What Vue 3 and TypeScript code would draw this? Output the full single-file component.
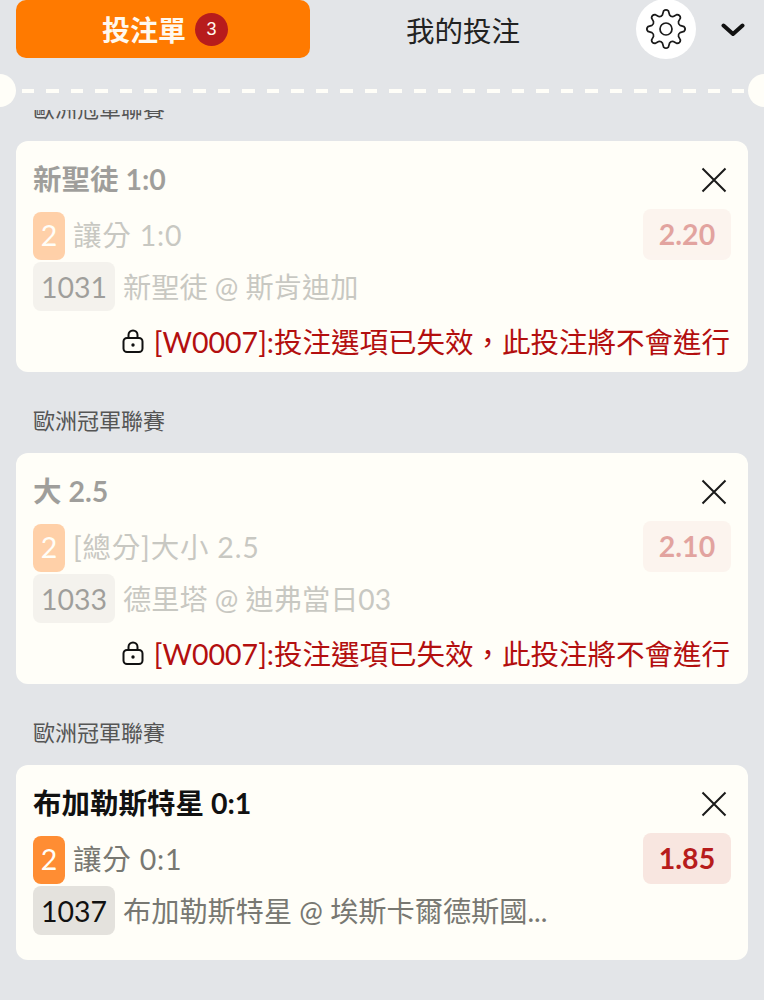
<script setup lang="ts">
type Bet = {
    league: string
    title: string
    market: string
    code: string
    teams: string
    odds: string
    locked: boolean
}

const bets: Bet[] = [
    { league: '歐洲冠軍聯賽', title: '新聖徒 1:0', market: '讓分 1:0', code: '1031', teams: '新聖徒 @ 斯肯迪加', odds: '2.20', locked: true },
    { league: '歐洲冠軍聯賽', title: '大 2.5', market: '[總分]大小 2.5', code: '1033', teams: '德里塔 @ 迪弗當日03', odds: '2.10', locked: true },
    { league: '歐洲冠軍聯賽', title: '布加勒斯特星 0:1', market: '讓分 0:1', code: '1037', teams: '布加勒斯特星 @ 埃斯卡爾德斯國...', odds: '1.85', locked: false }
]

// 8 tooth cog, drawn around the middle of a 44 box
const gearPath = (() => {
    const teeth = 8
    const outer = 19.7
    const inner = 14.5
    const step = (Math.PI * 2) / teeth
    const pt = (r: number, t: number) =>
        `${(22 + r * Math.cos(t)).toFixed(2)} ${(22 + r * Math.sin(t)).toFixed(2)}`
    let d = ''
    for (let i = 0; i < teeth; i++) {
        const a = i * step - Math.PI / 2
        d += i === 0 ? `M${pt(inner, a - step * 0.32)} ` : `Q${pt(inner - 1.5, a - step * 0.5)} ${pt(inner, a - step * 0.32)} `
        d += `L${pt(outer - 1.5, a - step * 0.17)} `
        d += `Q${pt(outer + 0.6, a)} ${pt(outer - 1.5, a + step * 0.17)} `
        d += `L${pt(inner, a + step * 0.32)} `
    }
    const first = -Math.PI / 2
    return `${d}Q${pt(inner - 1.5, first - step * 0.5)} ${pt(inner, first - step * 0.32)} Z`
})()
</script>

<template>
    <div class="page">
        <header class="tabs">
            <div class="tab-active">
                <span>投注單</span>
                <span class="count">3</span>
            </div>
            <div class="tab">我的投注</div>
            <div class="gear">
                <svg width="44" height="44" viewBox="0 0 44 44" fill="none" stroke="#1a1a1a" stroke-width="1.7" stroke-linejoin="round">
                    <path :d="gearPath" />
                    <circle cx="22" cy="22" r="6" />
                </svg>
            </div>
            <svg class="chevron" width="24" height="16" viewBox="0 0 24 16" fill="none" stroke="#111" stroke-width="4" stroke-linecap="round" stroke-linejoin="round">
                <path d="M2.5 3.5 12 12 21.5 3.5" />
            </svg>
        </header>

        <div class="ticket-edge">
            <span class="notch notch-left"></span>
            <span class="dashes"></span>
            <span class="notch notch-right"></span>
        </div>

        <main class="scroller">
            <section v-for="bet in bets" :key="bet.code" class="group">
                <div class="league">{{ bet.league }}</div>
                <article class="card" :class="{ locked: bet.locked }">
                    <div class="title-row">
                        <div class="title">{{ bet.title }}</div>
                        <svg class="close" width="26" height="26" viewBox="0 0 26 26" fill="none" stroke="#1a1a1a" stroke-width="2">
                            <path d="M1.5 1.5 24.5 24.5M24.5 1.5 1.5 24.5" />
                        </svg>
                    </div>
                    <div class="market-row">
                        <span class="num">2</span>
                        <span class="market">{{ bet.market }}</span>
                        <span class="odds">{{ bet.odds }}</span>
                    </div>
                    <div class="teams-row">
                        <span class="code">{{ bet.code }}</span>
                        <span class="teams">{{ bet.teams }}</span>
                    </div>
                    <div v-if="bet.locked" class="warn">
                        <svg width="22" height="24" viewBox="0 0 22 24" fill="none" stroke="#111" stroke-width="2">
                            <rect x="1.5" y="9" width="19" height="14" rx="3.5" />
                            <path d="M6.5 9V6a4.5 4.5 0 0 1 9 0v3" />
                            <circle cx="11" cy="16" r="1.7" fill="#111" stroke="none" />
                        </svg>
                        <span>[W0007]:投注選項已失效，此投注將不會進行</span>
                    </div>
                </article>
            </section>
        </main>
    </div>
</template>

<style>
html,
body {
    margin: 0;
    background: #e3e5e8;
}
</style>

<style scoped>
.page {
    width: 764px;
    height: 1000px;
    overflow: hidden;
    background: #e3e5e8;
    font-family: Lato, "Noto Sans CJK TC", sans-serif;
    color: #111;
}

.tabs {
    display: flex;
    align-items: center;
    height: 58px;
    padding: 0 16px;
}

.tab-active {
    width: 294px;
    height: 58px;
    box-sizing: border-box;
    padding-left: 4px;
    border-radius: 10px;
    background: #ff7a00;
    color: #fff8ee;
    font-size: 28px;
    font-weight: 700;
    display: flex;
    align-items: center;
    justify-content: center;
    gap: 9px;
}

.count {
    width: 33px;
    height: 33px;
    border-radius: 50%;
    background: #b71c1c;
    font-family: "Liberation Sans", sans-serif;
    font-size: 18px;
    font-weight: 400;
    display: flex;
    align-items: center;
    justify-content: center;
}

.tab {
    width: 306px;
    text-align: center;
    font-size: 28.5px;
    color: #222;
}

.gear {
    width: 60px;
    height: 60px;
    flex: none;
    margin-left: 20px;
    border-radius: 50%;
    background: #fff;
    display: flex;
    align-items: center;
    justify-content: center;
}

.chevron {
    margin-left: 25px;
    margin-top: 2px;
}

.ticket-edge {
    display: flex;
    align-items: center;
    height: 34px;
    margin-top: 16px;
    position: relative;
}

.notch {
    position: absolute;
    top: 0;
    width: 33px;
    height: 33px;
    border-radius: 50%;
    background: #fffef8;
}

.notch-left {
    left: -17px;
}

.notch-right {
    right: -17px;
}

.dashes {
    flex: 1;
    height: 4px;
    margin: 0 20px 0 22px;
    background: repeating-linear-gradient(90deg, #fffef8 0 12.5px, transparent 12.5px 24.5px);
}

.scroller {
    height: 890px;
    margin-top: 2px;
    overflow: hidden;
}

.group:first-child {
    margin-top: -35px;
}

.group + .group {
    margin-top: 15px;
}

.league {
    height: 66px;
    box-sizing: border-box;
    padding: 2px 0 0 33px;
    font-size: 22px;
    line-height: 22px;
    color: #555;
    display: flex;
    align-items: center;
}

.card {
    margin: 0 16px;
    padding: 16px 17px 25px;
    border-radius: 12px;
    background: #fffef8;
}

.card.locked {
    padding-bottom: 9px;
}

.title-row {
    display: flex;
    align-items: center;
    justify-content: space-between;
    height: 46px;
}

.title {
    margin-top: -5px;
    font-size: 28.5px;
    font-weight: 700;
}

.close {
    margin-right: 4px;
}

.market-row,
.teams-row {
    display: flex;
    align-items: center;
}

.market-row {
    height: 51px;
    margin-top: 6px;
}

.teams-row {
    height: 49px;
    margin-top: 2px;
}

.num {
    width: 32px;
    height: 48px;
    box-sizing: border-box;
    padding-bottom: 2px;
    align-self: flex-end;
    border-radius: 8px;
    background: #ff8d33;
    color: #fffef8;
    font-size: 28.5px;
    display: flex;
    align-items: center;
    justify-content: center;
}

.market {
    flex: 1;
    margin: -2px 0 0 8px;
    font-size: 28.5px;
    letter-spacing: 0.8px;
    color: #787872;
}

.odds {
    width: 88px;
    height: 51px;
    box-sizing: border-box;
    padding-bottom: 2px;
    border-radius: 8px;
    background: #f8e6e0;
    color: #b71c1c;
    font-size: 28.5px;
    font-weight: 700;
    display: flex;
    align-items: center;
    justify-content: center;
}

.code {
    width: 82px;
    height: 49px;
    border-radius: 8px;
    background: #e4e2dd;
    font-size: 28.5px;
    display: flex;
    align-items: center;
    justify-content: center;
}

.teams {
    margin: -2px 0 0 8px;
    font-size: 28.2px;
    color: #787872;
}

.warn {
    display: flex;
    align-items: center;
    justify-content: flex-end;
    gap: 10px;
    height: 45px;
    margin-top: 7px;
    padding-right: 1px;
    font-size: 28.5px;
    color: #b30f0f;
}

.locked .title,
.locked .market,
.locked .teams,
.locked .num,
.locked .odds,
.locked .code {
    opacity: 0.4;
}
</style>
